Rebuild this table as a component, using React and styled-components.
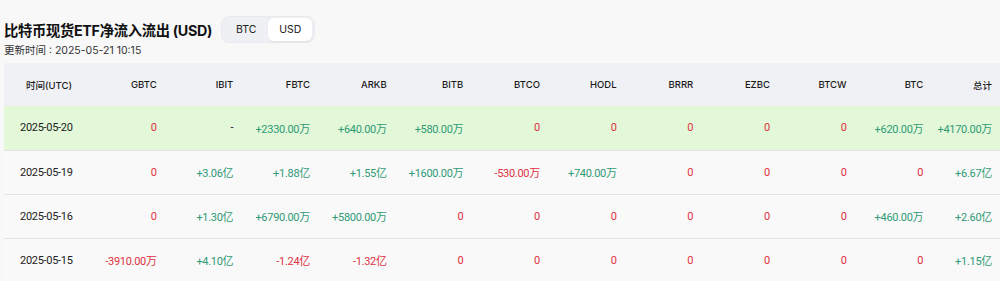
import React from "react";
import styled, { createGlobalStyle } from "styled-components";

const Global = createGlobalStyle`
  html, body {
    margin: 0;
    padding: 0;
    background: #f8f8f9;
    font-family: Inter, "Noto Sans CJK SC", sans-serif;
    color: #1d1d1f;
    overflow: hidden;
  }
`;

const columns = [
  "GBTC", "IBIT", "FBTC", "ARKB", "BITB", "BTCO",
  "HODL", "BRRR", "EZBC", "BTCW", "BTC", "总计",
];

const rows = [
  {
    date: "2025-05-20",
    highlight: true,
    values: ["0", "-", "+2330.00万", "+640.00万", "+580.00万", "0", "0", "0", "0", "0", "+620.00万", "+4170.00万"],
  },
  {
    date: "2025-05-19",
    values: ["0", "+3.06亿", "+1.88亿", "+1.55亿", "+1600.00万", "-530.00万", "+740.00万", "0", "0", "0", "0", "+6.67亿"],
  },
  {
    date: "2025-05-16",
    values: ["0", "+1.30亿", "+6790.00万", "+5800.00万", "0", "0", "0", "0", "0", "0", "+460.00万", "+2.60亿"],
  },
  {
    date: "2025-05-15",
    values: ["-3910.00万", "+4.10亿", "-1.24亿", "-1.32亿", "0", "0", "0", "0", "0", "0", "0", "+1.15亿"],
  },
];

function tone(v) {
  if (v.startsWith("+")) return "up";
  if (v === "-") return "none";
  return "down";
}

export default function App() {
  return (
    <Page>
      <Global />
      <TitleBar>
        <Title>比特币现货ETF净流入流出 (USD)</Title>
        <Toggle>
          <ToggleButton>BTC</ToggleButton>
          <ToggleButton $active>USD</ToggleButton>
        </Toggle>
      </TitleBar>
      <Updated>更新时间 : 2025-05-21 10:15</Updated>
      <Table>
        <colgroup>
          <col style={{ width: 84 }} />
          {columns.slice(0, -1).map((c) => (
            <col key={c} style={{ width: 76.67 }} />
          ))}
          <col />
        </colgroup>
        <thead>
          <tr>
            <HeadCell $first>时间(UTC)</HeadCell>
            {columns.map((c) => (
              <HeadCell key={c}>{c}</HeadCell>
            ))}
          </tr>
        </thead>
        <tbody>
          {rows.map((r) => (
            <Row key={r.date} $highlight={r.highlight}>
              <DateCell>{r.date}</DateCell>
              {r.values.map((v, i) => (
                <ValueCell key={i} $tone={tone(v)}>
                  {v}
                </ValueCell>
              ))}
            </Row>
          ))}
        </tbody>
      </Table>
    </Page>
  );
}

const Page = styled.div`
  padding: 16px 0 0 4px;
`;

const TitleBar = styled.div`
  display: flex;
  align-items: center;
  gap: 9px;
  height: 27px;
`;

const Title = styled.h1`
  margin: 0;
  font-size: 14.3px;
  font-weight: 700;
  color: #111;
  letter-spacing: -0.3px;
`;

const Toggle = styled.div`
  display: flex;
  align-items: center;
  height: 27px;
  box-sizing: border-box;
  padding: 2px;
  border-radius: 8px;
  background: #eff0f3;
  border: 1px solid #e9eaee;
`;

const ToggleButton = styled.div`
  display: flex;
  align-items: center;
  justify-content: center;
  width: 44px;
  height: 23px;
  border-radius: 6px;
  font-size: 10.5px;
  color: #222;
  background: ${(p) => (p.$active ? "#ffffff" : "transparent")};
  box-shadow: ${(p) => (p.$active ? "0 1px 2px rgba(0,0,0,0.06)" : "none")};
`;

const Updated = styled.div`
  margin-top: 1px;
  font-size: 10.5px;
  line-height: 14px;
  color: #333;
`;

const Table = styled.table`
  margin-top: 5px;
  width: 996px;
  table-layout: fixed;
  border-collapse: collapse;
`;

const HeadCell = styled.th`
  height: 43px;
  padding: 0 ${(p) => (p.$first ? "0 0 22px" : "8px 0 0")};
  background: #f0f1f5;
  font-size: 9.5px;
  font-weight: 500;
  color: #1a1a1a;
  text-align: ${(p) => (p.$first ? "left" : "right")};
  white-space: nowrap;
`;

const Row = styled.tr`
  height: 44px;
  background: ${(p) => (p.$highlight ? "#e2f8d8" : "#f9f9f9")};
  border-bottom: 1px solid #e4e4e4;
`;

const DateCell = styled.td`
  padding-left: 16px;
  font-family: Roboto, sans-serif;
  font-size: 11px;
  letter-spacing: -0.3px;
  color: #222;
  white-space: nowrap;
`;

const ValueCell = styled.td`
  padding-right: 8px;
  text-align: right;
  font-family: Roboto, "Noto Sans CJK SC", sans-serif;
  font-size: 11px;
  letter-spacing: -0.3px;
  white-space: nowrap;
  color: ${(p) =>
    p.$tone === "up" ? "#2f9a76" : p.$tone === "down" ? "#e0313f" : "#222"};
`;
